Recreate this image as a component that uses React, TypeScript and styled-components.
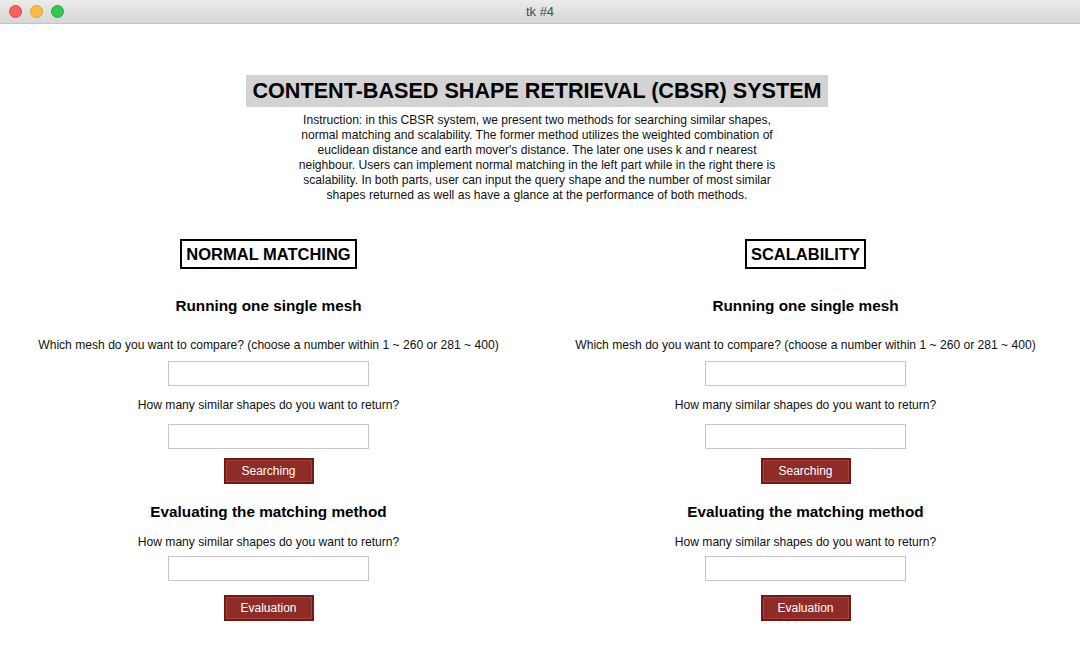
import React from "react";
import styled, { createGlobalStyle } from "styled-components";

const Global = createGlobalStyle`
  html, body { margin: 0; padding: 0; background: #ffffff; }
  body { font-family: "Liberation Sans", Arial, sans-serif; color: #000; }
  * { box-sizing: border-box; }
`;

const Window = styled.div`
  width: 1080px;
  height: 672px;
  display: flex;
  flex-direction: column;
  background: #ffffff;
  overflow: hidden;
`;

const TitleBar = styled.div`
  height: 24px;
  flex: 0 0 24px;
  display: flex;
  align-items: center;
  position: relative;
  background: linear-gradient(#ebebeb, #d6d6d6);
  border-bottom: 1px solid #c4c4c4;
`;

const Lights = styled.div`
  display: flex;
  gap: 8px;
  padding-left: 9px;
`;

const Light = styled.span<{ $c: string; $b: string }>`
  width: 13px;
  height: 13px;
  border-radius: 50%;
  background: ${(p) => p.$c};
  border: 1px solid ${(p) => p.$b};
`;

const WindowTitle = styled.div`
  position: absolute;
  left: 0;
  right: 0;
  text-align: center;
  font-size: 13px;
  color: #4a4a4a;
  pointer-events: none;
`;

const Content = styled.div`
  width: 1074px;
  display: flex;
  flex-direction: column;
  align-items: center;
`;

const MainTitle = styled.h1`
  margin: 51px 0 0;
  height: 32px;
  padding: 0 6px;
  display: flex;
  align-items: center;
  background: #d3d3d3;
  font-size: 21.6px;
  font-weight: bold;
  letter-spacing: 0;
`;

const Instruction = styled.p`
  margin: 6px 0 0;
  font-size: 12.1px;
  line-height: 15px;
  text-align: center;
  color: #111;
`;

const Columns = styled.div`
  margin-top: 36px;
  width: 100%;
  display: grid;
  grid-template-columns: 1fr 1fr;
`;

const Column = styled.section`
  display: flex;
  flex-direction: column;
  align-items: center;
`;

const SectionBox = styled.div`
  height: 30px;
  padding: 0 4px;
  display: flex;
  align-items: center;
  border: 2px solid #000;
  font-size: 16.5px;
  font-weight: bold;
`;

const SubHeading = styled.h2<{ $mt: number }>`
  margin: ${(p) => p.$mt}px 0 0;
  font-size: 15.3px;
  line-height: 18px;
  font-weight: bold;
`;

const Label = styled.div<{ $mt: number }>`
  margin-top: ${(p) => p.$mt}px;
  font-size: 12.1px;
  line-height: 16px;
  color: #111;
`;

const Field = styled.input<{ $mt: number }>`
  margin-top: ${(p) => p.$mt}px;
  width: 201px;
  height: 25px;
  border: 1px solid #c6c6c6;
  background: #fff;
  outline: none;
  padding: 0 4px;
`;

const Button = styled.button<{ $mt: number }>`
  margin-top: ${(p) => p.$mt}px;
  width: 90px;
  height: 26px;
  background: #8f2c27;
  border: 2px solid #6e1a17;
  box-shadow: inset 0 0 0 1px #a6423a;
  color: #fff;
  font-family: "Liberation Sans", Arial, sans-serif;
  font-size: 12px;
  padding: 0;
  cursor: pointer;
`;

function Panel({ title }: { title: string }) {
  return (
    <Column>
      <SectionBox>{title}</SectionBox>
      <SubHeading $mt={28}>Running one single mesh</SubHeading>
      <Label $mt={22}>
        Which mesh do you want to compare? (choose a number within 1 ~ 260 or 281 ~ 400)
      </Label>
      <Field $mt={8} />
      <Label $mt={11}>How many similar shapes do you want to return?</Label>
      <Field $mt={11} />
      <Button $mt={9}>Searching</Button>
      <SubHeading $mt={19}>Evaluating the matching method</SubHeading>
      <Label $mt={13}>How many similar shapes do you want to return?</Label>
      <Field $mt={6} />
      <Button $mt={14}>Evaluation</Button>
    </Column>
  );
}

export default function App() {
  return (
    <>
      <Global />
      <Window>
        <TitleBar>
          <Lights>
            <Light $c="#fc605c" $b="#de4a44" />
            <Light $c="#fdbc40" $b="#de9f30" />
            <Light $c="#34c84a" $b="#27a83a" />
          </Lights>
          <WindowTitle>tk #4</WindowTitle>
        </TitleBar>
        <Content>
          <MainTitle>CONTENT-BASED SHAPE RETRIEVAL (CBSR) SYSTEM</MainTitle>
          <Instruction>
            Instruction: in this CBSR system, we present two methods for searching similar shapes,
            <br />
            normal matching and scalability. The former method utilizes the weighted combination of
            <br />
            euclidean distance and earth mover's distance. The later one uses k and r nearest
            <br />
            neighbour. Users can implement normal matching in the left part while in the right there is
            <br />
            scalability. In both parts, user can input the query shape and the number of most similar
            <br />
            shapes returned as well as have a glance at the performance of both methods.
          </Instruction>
          <Columns>
            <Panel title="NORMAL MATCHING" />
            <Panel title="SCALABILITY" />
          </Columns>
        </Content>
      </Window>
    </>
  );
}
